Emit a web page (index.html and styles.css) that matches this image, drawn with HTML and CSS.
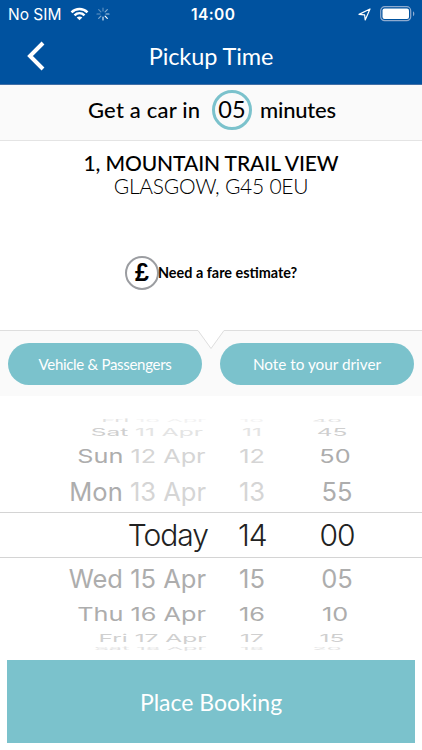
FILE: index.html
```html
<!DOCTYPE html>
<html lang="en">
<head>
    <meta charset="UTF-8">
    <meta name="viewport" content="width=device-width, initial-scale=1.0">
    <title>Pickup Time</title>
    <link rel="stylesheet" href="styles.css">
</head>
<body>
    <header class="header">
        <div class="status-bar">
            <div class="status-left">
                <span class="carrier">No SIM</span>
                <svg class="wifi" width="19" height="14" viewBox="0 0 18 14" fill="none" stroke="#fff" stroke-width="2.5">
                    <path d="M1 5.3C5.5 .8 12.5 .8 17 5.3" />
                    <path d="M4 8.4C6.9 5.6 11.1 5.6 14 8.4" />
                    <path d="M9 13.3L6.2 10.5C7.8 9.1 10.2 9.1 11.8 10.5Z" fill="#fff" stroke="none" />
                </svg>
                <svg class="spinner" width="14" height="14" viewBox="-7 -7 14 14" stroke="#fff" stroke-width="1.2" stroke-linecap="round">
                    <path d="M0-3V-6" opacity=".35" />
                    <path d="M2.1-2.1L4.3-4.3" opacity=".5" />
                    <path d="M3 0H6" opacity=".7" />
                    <path d="M2.1 2.1L4.3 4.3" />
                    <path d="M0 3V6" opacity=".85" />
                    <path d="M-2.1 2.1L-4.3 4.3" opacity=".5" />
                    <path d="M-3 0H-6" opacity=".4" />
                    <path d="M-2.1-2.1L-4.3-4.3" opacity=".35" />
                </svg>
            </div>
            <span class="clock">14:00</span>
            <div class="status-right">
                <svg class="location" width="13" height="13" viewBox="0 0 13 13" fill="none" stroke="#fff" stroke-width="1.2" stroke-linejoin="round">
                    <path d="M1 6.4L12 1L7.2 12L6.6 6.8Z" />
                </svg>
                <svg class="battery" width="35" height="16" viewBox="0 0 35 16">
                    <rect x=".7" y=".7" width="30" height="14" rx="4" fill="none" stroke="#8eabd0" stroke-width="1.2" />
                    <rect x="2.5" y="2.5" width="26.5" height="10.5" rx="2" fill="#fff" />
                    <path d="M33 5.2C34.8 6.2 34.8 9.2 33 10.2Z" fill="#8eabd0" />
                </svg>
            </div>
        </div>
        <div class="nav">
            <svg class="back" width="18" height="30" viewBox="0 0 18 30" fill="none" stroke="#fff" stroke-width="4">
                <path d="M16 2L3 15L16 28" />
            </svg>
            <h1 class="title">Pickup Time</h1>
        </div>
    </header>

    <section class="eta">
        <span class="eta-lead">Get a car in</span>
        <span class="eta-badge">05</span>
        <span class="eta-unit">minutes</span>
    </section>

    <section class="address">
        <p class="street">1, MOUNTAIN TRAIL VIEW</p>
        <p class="city">GLASGOW, G45 0EU</p>
        <div class="fare">
            <span class="pound">£</span>
            <span class="fare-text">Need a fare estimate?</span>
        </div>
    </section>

    <section class="options">
        <svg class="notch" width="422" height="22" viewBox="0 0 422 22">
            <path d="M0 1.5H198L211 19.5L224 1.5H422V22H0Z" fill="#fafafa" />
            <path d="M0 1.5H198L211 19.5L224 1.5H422" fill="none" stroke="#dedede" />
        </svg>
        <button class="pill pill-vehicle">Vehicle &amp; Passengers</button>
        <button class="pill pill-note">Note to your driver</button>
    </section>

    <section class="picker">
        <div class="row far past">
            <span class="date"><b>Fri</b> 10 Apr</span><span class="hour">10</span><span class="minute">40</span>
        </div>
        <div class="row third past">
            <span class="date"><b>Sat</b> 11 Apr</span><span class="hour">11</span><span class="minute">45</span>
        </div>
        <div class="row second past">
            <span class="date"><b>Sun</b> 12 Apr</span><span class="hour">12</span><span class="minute">50</span>
        </div>
        <div class="row first past">
            <span class="date"><b>Mon</b> 13 Apr</span><span class="hour">13</span><span class="minute">55</span>
        </div>
        <div class="row selected">
            <span class="date">Today</span><span class="hour">14</span><span class="minute">00</span>
        </div>
        <div class="row first">
            <span class="date">Wed 15 Apr</span><span class="hour">15</span><span class="minute">05</span>
        </div>
        <div class="row second">
            <span class="date">Thu 16 Apr</span><span class="hour">16</span><span class="minute">10</span>
        </div>
        <div class="row third">
            <span class="date">Fri 17 Apr</span><span class="hour">17</span><span class="minute">15</span>
        </div>
        <div class="row far">
            <span class="date">Sat 18 Apr</span><span class="hour">18</span><span class="minute">20</span>
        </div>
    </section>

    <button class="book-button">Place Booking</button>
</body>
</html>
```

FILE: styles.css
```css
* {
    box-sizing: border-box;
}

body {
    margin: 0;
    height: 750px;
    overflow: hidden;
    background-color: #fff;
    color: #000;
    font-family: Lato, sans-serif;
}

button {
    border: none;
    padding: 0;
    color: #fff;
    font-family: inherit;
    background-color: #7bc2cc;
}

.header {
    height: 85px;
    background-color: #00529f;
    border-bottom: 1px solid #416fa6;
    color: #fff;
}

.status-bar {
    height: 28px;
    display: grid;
    grid-template-columns: 183px 1fr 60px;
    align-items: center;
    padding: 0 7px 0 8px;
    font-family: Inter, sans-serif;
}

.status-left,
.status-right {
    display: flex;
    align-items: center;
}

.status-right {
    justify-content: flex-end;
    gap: 9px;
}

.carrier {
    width: 53px;
    font-size: 15.5px;
    white-space: nowrap;
}

.wifi {
    margin-left: 9px;
}

.spinner {
    margin-left: 7px;
}

.clock {
    font-size: 15.5px;
    font-weight: 600;
    letter-spacing: 0.4px;
}

.nav {
    height: 56px;
    display: grid;
    grid-template-columns: 50px 1fr 50px;
    align-items: center;
}

.back {
    margin-left: 27px;
}

.title {
    margin: -1px 0 0;
    font-size: 23.5px;
    font-weight: 400;
    letter-spacing: -0.1px;
    text-align: center;
}

.eta {
    height: 56px;
    display: flex;
    align-items: flex-start;
    padding: 5px 0 0 88px;
    background-color: #fafafa;
    border-bottom: 1px solid #e4e4e4;
    font-size: 22px;
    font-weight: 500;
    line-height: 40px;
    white-space: nowrap;
}

.eta-lead {
    width: 124px;
    letter-spacing: 0.2px;
}

.eta-badge {
    width: 40px;
    height: 40px;
    border: 3px solid #7bc2cc;
    border-radius: 50%;
    font-size: 23.5px;
    font-weight: 400;
    line-height: 33px;
    text-align: center;
}

.eta-unit {
    margin-left: 8px;
    letter-spacing: -0.2px;
}

.address {
    height: 188px;
    padding-top: 10px;
    text-align: center;
}

.street,
.city {
    margin: 0;
    font-size: 21px;
    line-height: 24px;
}

.street {
    font-weight: 500;
    letter-spacing: -0.1px;
}

.city {
    margin-top: -1px;
    font-weight: 300;
    letter-spacing: -0.25px;
}

.fare {
    display: flex;
    align-items: center;
    margin: 58px 0 0 125px;
}

.pound {
    width: 34px;
    height: 34px;
    border: 2px solid #9b9da1;
    border-radius: 50%;
    font: bold 25px/29px "Liberation Sans", sans-serif;
}

.fare-text {
    margin: -2px 0 0 -1px;
    font-size: 14.4px;
    font-weight: 700;
}

.options {
    position: relative;
    height: 67px;
    display: flex;
    gap: 18px;
    padding: 14px 8px 0;
    background-color: #fafafa;
}

.notch {
    position: absolute;
    top: 0;
    left: 0;
    background-color: #fff;
}

.pill {
    position: relative;
    flex: 1;
    height: 42px;
    border-radius: 21px;
    font-size: 15.3px;
}

.pill-vehicle {
    font-size: 15px;
    letter-spacing: -0.3px;
}

.picker {
    height: 264px;
    padding-top: 23px;
    font-family: Inter, sans-serif;
    font-size: 25.5px;
    color: #adadad;
    overflow: hidden;
}

/* each row is squashed further the more it turns away on the wheel */
.row {
    display: grid;
    grid-template-columns: 206px 108px 1fr;
    grid-template-rows: 100%;
    align-items: center;
    line-height: 30px;
    white-space: nowrap;
}

.row span {
    transform: scale(var(--sx), var(--sy));
}

.row b {
    font-weight: 400;
    color: #adadad;
}

.date {
    justify-self: end;
    transform-origin: right center;
}

.hour {
    width: 28px;
    margin-left: 32px;
    text-align: center;
}

.minute {
    width: 36px;
    margin-left: 5px;
    text-align: center;
}

.past {
    color: #d5d5d5;
}

.past .minute {
    color: #adadad;
}

.first {
    --sx: 1;
    --sy: 1;
    height: 41px;
}

.second {
    --sx: 0.99;
    --sy: 0.74;
    height: 30px;
}

.second .minute {
    margin-left: 3px;
}

.third {
    --sx: 0.96;
    --sy: 0.42;
    height: 18px;
    color: #d0d0d0;
}

.third .minute {
    margin-left: 0;
}

.third b,
.third .minute {
    color: #cfcfcf;
}

.third.past {
    color: #e4e4e4;
}

.third.past .date {
    margin-right: 3px;
}

.far {
    --sx: 0.92;
    --sy: 0.16;
    height: 4px;
    color: #e2e2e2;
}

.far .minute {
    margin-left: -5px;
}

.far.past {
    height: 4px;
    color: #f2f2f2;
}

.far b,
.far.past .minute {
    color: #e2e2e2;
}

.selected {
    --sx: 1;
    --sy: 1;
    height: 46px;
    border-top: 1px solid #d4d4d4;
    border-bottom: 1px solid #d4d4d4;
    font-size: 30px;
    font-weight: 350;
    letter-spacing: -1px;
    line-height: 32px;
    color: #222;
}

.selected .date {
    margin-right: -2px;
}

.book-button {
    display: block;
    width: 408px;
    height: 83px;
    margin: 0 7px;
    font-size: 23px;
}
```
